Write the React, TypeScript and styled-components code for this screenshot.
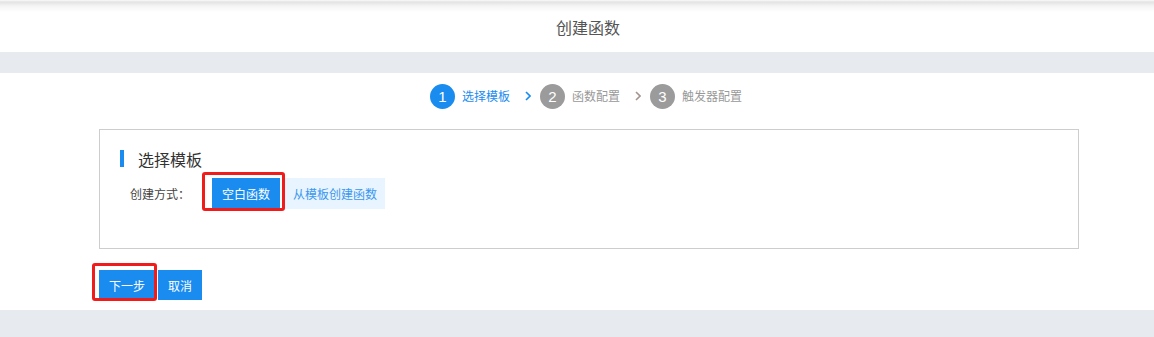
import React from "react";
import styled, { createGlobalStyle } from "styled-components";

const GlobalStyle = createGlobalStyle`
  html, body { margin: 0; padding: 0; background: #fff; }
  body { font-family: "Noto Sans CJK SC", "Noto Sans", "Liberation Sans", sans-serif; }
  * { box-sizing: border-box; }
`;

const Page = styled.div`
  width: 1154px;
  height: 337px;
  overflow: hidden;
  display: flex;
  flex-direction: column;
`;

const Header = styled.header`
  height: 52px;
  display: flex;
  align-items: center;
  justify-content: center;
  padding-left: 22px;
  padding-top: 2px;
  background: linear-gradient(to bottom, #fafafa 0, #e3e3e3 2px, #f4f4f4 6px, #fff 12px);
`;

const Title = styled.h1`
  margin: 0;
  font-size: 16px;
  font-weight: 400;
  color: #555;
  line-height: 20px;
`;

const Band = styled.div<{ $h: number }>`
  height: ${(p) => p.$h}px;
  background: #e7eaef;
  flex: none;
`;

const Main = styled.main`
  height: 237px;
  padding: 11px 0 10px 99px;
  display: flex;
  flex-direction: column;
`;

const Steps = styled.ol`
  margin: 0;
  padding: 0 0 0 331px;
  list-style: none;
  display: flex;
  align-items: center;
  height: 24px;
`;

const Step = styled.li`
  display: flex;
  align-items: center;
  gap: 7px;
`;

const Circle = styled.span<{ $active?: boolean }>`
  width: 25px;
  height: 25px;
  border-radius: 50%;
  background: ${(p) => (p.$active ? "#1a8cf0" : "#9b9b9b")};
  color: #fff;
  font-family: "Liberation Sans", Arial, sans-serif;
  font-size: 15px;
  display: flex;
  align-items: center;
  justify-content: center;
`;

const StepLabel = styled.span<{ $active?: boolean }>`
  font-size: 12px;
  color: ${(p) => (p.$active ? "#1a8cf0" : "#999")};
  line-height: 16px;
`;

const Chevron = styled.svg`
  margin: 0 9px 0 15px;
  flex: none;
`;

const Card = styled.section`
  margin-top: 21px;
  width: 980px;
  height: 121px;
  border: 1px solid #cdcdcd;
  padding: 20px 0 0 20px;
`;

const CardTitle = styled.h2`
  margin: 0;
  display: flex;
  align-items: center;
  height: 17px;
  font-size: 16px;
  font-weight: 400;
  color: #333;
  &::before {
    content: "";
    width: 4px;
    height: 17px;
    background: #1a8cf0;
    margin-right: 14px;
  }
`;

const FieldRow = styled.div`
  margin-top: 11px;
  display: flex;
  align-items: center;
  padding-left: 10px;
`;

const FieldLabel = styled.span`
  width: 82px;
  font-size: 12px;
  color: #444;
`;

const Choice = styled.button<{ $selected?: boolean }>`
  position: relative;
  height: 31px;
  border: none;
  padding: 0 ${(p) => (p.$selected ? 10 : 8)}px;
  width: ${(p) => (p.$selected ? 68 : 100)}px;
  margin-left: ${(p) => (p.$selected ? 0 : 5)}px;
  font-family: inherit;
  font-size: 12px;
  cursor: pointer;
  background: ${(p) => (p.$selected ? "#1a8cf0" : "#e8f4ff")};
  color: ${(p) => (p.$selected ? "#fff" : "#3a97ee")};
`;

const Highlight = styled.span<{ $l: number; $t: number; $r: number; $b: number }>`
  position: absolute;
  left: ${(p) => p.$l}px;
  top: ${(p) => p.$t}px;
  right: ${(p) => p.$r}px;
  bottom: ${(p) => p.$b}px;
  border: 3px solid #f01c1c;
  border-radius: 3px;
  pointer-events: none;
`;

const Actions = styled.div`
  margin-top: 21px;
  display: flex;
  gap: 3px;
`;

const ActionButton = styled.button`
  position: relative;
  height: 30px;
  padding: 0 10px;
  border: none;
  background: #1a8cf0;
  color: #fff;
  font-family: inherit;
  font-size: 12px;
  cursor: pointer;
`;

const ChevronIcon = ({ color }: { color: string }) => (
  <Chevron width="6" height="10" viewBox="0 0 6 10">
    <path d="M1 1 L5 5 L1 9" fill="none" stroke={color} strokeWidth="1.6" />
  </Chevron>
);

const steps = [
  { n: 1, label: "选择模板", active: true },
  { n: 2, label: "函数配置", active: false },
  { n: 3, label: "触发器配置", active: false },
];

export default function App() {
  return (
    <Page>
      <GlobalStyle />
      <Header>
        <Title>创建函数</Title>
      </Header>
      <Band $h={21} />
      <Main>
        <Steps>
          {steps.map((s, i) => (
            <React.Fragment key={s.n}>
              <Step>
                <Circle $active={s.active}>{s.n}</Circle>
                <StepLabel $active={s.active}>{s.label}</StepLabel>
              </Step>
              {i < steps.length - 1 && (
                <ChevronIcon color={i === 0 ? "#1a8cf0" : "#a8948f"} />
              )}
            </React.Fragment>
          ))}
        </Steps>
        <Card>
          <CardTitle>选择模板</CardTitle>
          <FieldRow>
            <FieldLabel>创建方式：</FieldLabel>
            <Choice $selected>
              空白函数
              <Highlight $l={-10} $t={-6} $r={-5} $b={-2} />
            </Choice>
            <Choice>从模板创建函数</Choice>
          </FieldRow>
        </Card>
        <Actions>
          <ActionButton>
            下一步
            <Highlight $l={-7} $t={-7} $r={-2} $b={-1} />
          </ActionButton>
          <ActionButton>取消</ActionButton>
        </Actions>
      </Main>
      <Band $h={27} />
    </Page>
  );
}
